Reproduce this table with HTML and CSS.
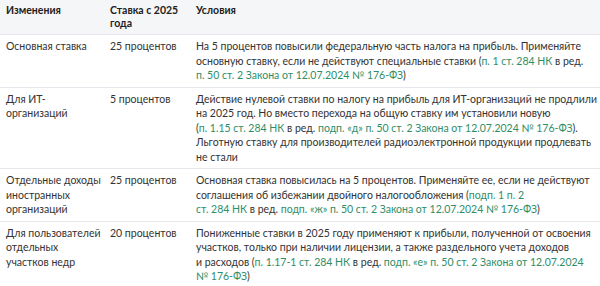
FILE: index.html
```html
<!DOCTYPE html>
<html lang="ru">
<head>
<meta charset="utf-8">
<link rel="stylesheet" href="styles.css">
</head>
<body>
<table class="rates">
  <colgroup>
    <col class="c1">
    <col class="c2">
    <col class="c3">
  </colgroup>
  <thead>
    <tr>
      <th>Изменения</th>
      <th>Ставка с 2025 года</th>
      <th>Условия</th>
    </tr>
  </thead>
  <tbody>
    <tr>
      <td>Основная ставка</td>
      <td>25 процентов</td>
      <td>На 5 процентов повысили федеральную часть налога на прибыль. Применяйте основную ставку, если не действуют специальные ставки (<a href="#">п.&nbsp;1 ст.&nbsp;284&nbsp;НК</a>&nbsp;в&nbsp;ред. <a href="#">п.&nbsp;50 ст.&nbsp;2 Закона от 12.07.2024 <span class="nw">№&nbsp;176-ФЗ</span></a>)</td>
    </tr>
    <tr>
      <td>Для ИТ-организаций</td>
      <td>5 процентов</td>
      <td>Действие нулевой ставки по налогу на прибыль для ИТ-организаций не продлили на 2025 год. Но вместо перехода на общую ставку им установили новую <span class="nw">(<a href="#">п.&nbsp;1.15 ст.&nbsp;284&nbsp;НК</a></span>&nbsp;в&nbsp;ред. <a href="#">подп.&nbsp;«д» п.&nbsp;50 ст.&nbsp;2 Закона от 12.07.2024 <span class="nw">№&nbsp;176-ФЗ</span></a>). Льготную ставку для производителей радиоэлектронной продукции продлевать не&nbsp;стали</td>
    </tr>
    <tr>
      <td>Отдельные доходы иностранных организаций</td>
      <td>25 процентов</td>
      <td>Основная ставка повысилась на 5 процентов. Применяйте ее, если не действуют соглашения об избежании двойного налогообложения (<a href="#">подп.&nbsp;1 п.&nbsp;2 ст.&nbsp;284&nbsp;НК</a>&nbsp;в&nbsp;ред. <a href="#">подп.&nbsp;«ж» п.&nbsp;50 ст.&nbsp;2 Закона от 12.07.2024 <span class="nw">№&nbsp;176-ФЗ</span></a>)</td>
    </tr>
    <tr>
      <td>Для пользователей отдельных участков недр</td>
      <td>20 процентов</td>
      <td>Пониженные ставки в 2025 году применяют к прибыли, полученной от освоения участков, только при наличии лицензии, а также раздельного учета доходов и&nbsp;расходов (<a href="#">п.&nbsp;<span class="nw">1.17-1</span> ст.&nbsp;284&nbsp;НК</a>&nbsp;в&nbsp;ред. <a href="#">подп.&nbsp;«е» п.&nbsp;50 ст.&nbsp;2 Закона от 12.07.2024 <span class="nw">№&nbsp;176-ФЗ</span></a>)</td>
    </tr>
  </tbody>
</table>
</body>
</html>
```

FILE: styles.css
```css
html, body {
  margin: 0;
  padding: 0;
  background: #ffffff;
}

body {
  font-family: "Lato", "Open Sans", sans-serif;
  font-size: 10.5px;
  line-height: 14.5px;
  color: #333333;
}

.rates {
  width: 600px;
  border-collapse: collapse;
  table-layout: fixed;
}

.rates .c1 { width: 104px; }
.rates .c2 { width: 86px; }

.rates th,
.rates td {
  padding: 4px 1px 4px 6px;
  text-align: left;
  vertical-align: top;
  border-bottom: 1px solid #e6e8ee;
}

.rates th {
  padding-top: 4px;
  padding-bottom: 4px;
  line-height: 13px;
  background: #f5f6f8;
  font-weight: 700;
  color: #222222;
}

.rates a {
  color: #2f8e67;
  text-decoration: none;
}

.nw {
  white-space: nowrap;
}
```
